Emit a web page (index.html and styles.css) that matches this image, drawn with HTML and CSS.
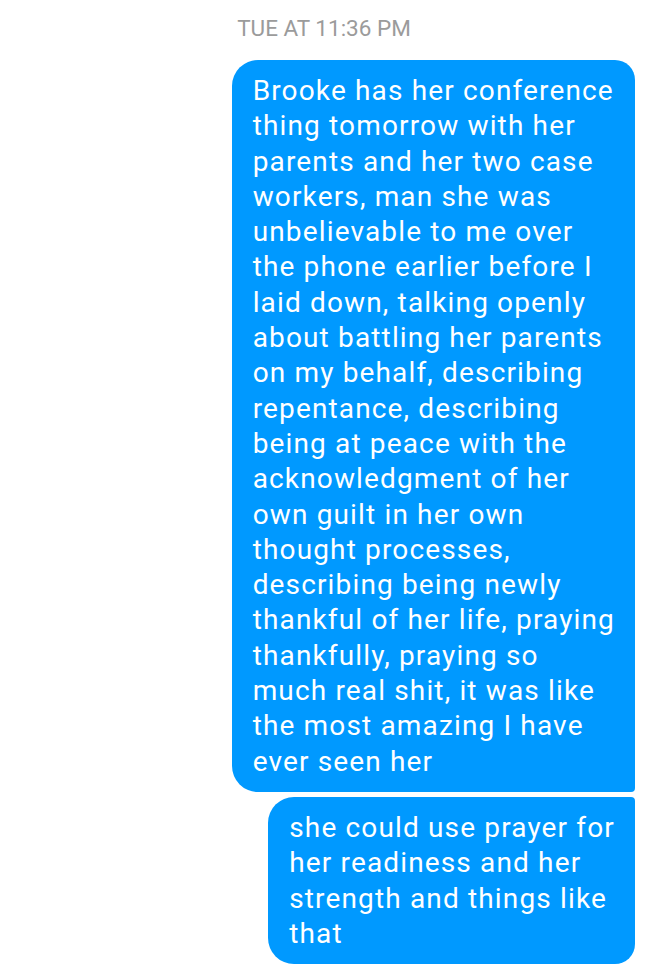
FILE: index.html
```html
<!DOCTYPE html>
<html>
<head>
<meta charset="utf-8">
<link rel="stylesheet" href="styles.css">
</head>
<body>
<div class="thread">
  <div class="stamp">TUE AT 11:36 PM</div>
  <div class="msgs">
    <div class="bubble first">Brooke has her conference<br>thing tomorrow with her<br>parents and her two case<br>workers, man she was<br>unbelievable to me over<br>the phone earlier before I<br>laid down, talking openly<br>about battling her parents<br>on my behalf, describing<br>repentance, describing<br>being at peace with the<br>acknowledgment of her<br>own guilt in her own<br>thought processes,<br>describing being newly<br>thankful of her life, praying<br>thankfully, praying so<br>much real shit, it was like<br>the most amazing I have<br>ever seen her</div>
    <div class="bubble last">she could use prayer for<br>her readiness and her<br>strength and things like<br>that</div>
  </div>
</div>
</body>
</html>
```
FILE: styles.css
```css
html, body {
  margin: 0;
  padding: 0;
  background: #ffffff;
}
body {
  font-family: Roboto, "Noto Sans", sans-serif;
  width: 648px;
  height: 979px;
  overflow: hidden;
}
.thread {
  display: flex;
  flex-direction: column;
  padding: 14px 13px 0 13px;
}
.stamp {
  text-align: center;
  color: #9b9b9b;
  font-size: 22.5px;
  line-height: 28px;
  height: 32px;
}
.msgs {
  margin-top: 14px;
  display: flex;
  flex-direction: column;
  align-items: flex-end;
  gap: 5px;
}
.bubble {
  background: #0099ff;
  color: #ffffff;
  font-size: 28px;
  letter-spacing: 1.15px;
  line-height: 35.3px;
  padding: 13px 20px 13px 21px;
  white-space: nowrap;
}
.first {
  border-radius: 26px 20px 4px 26px;
}
.last {
  border-radius: 26px 4px 20px 26px;
}
```
